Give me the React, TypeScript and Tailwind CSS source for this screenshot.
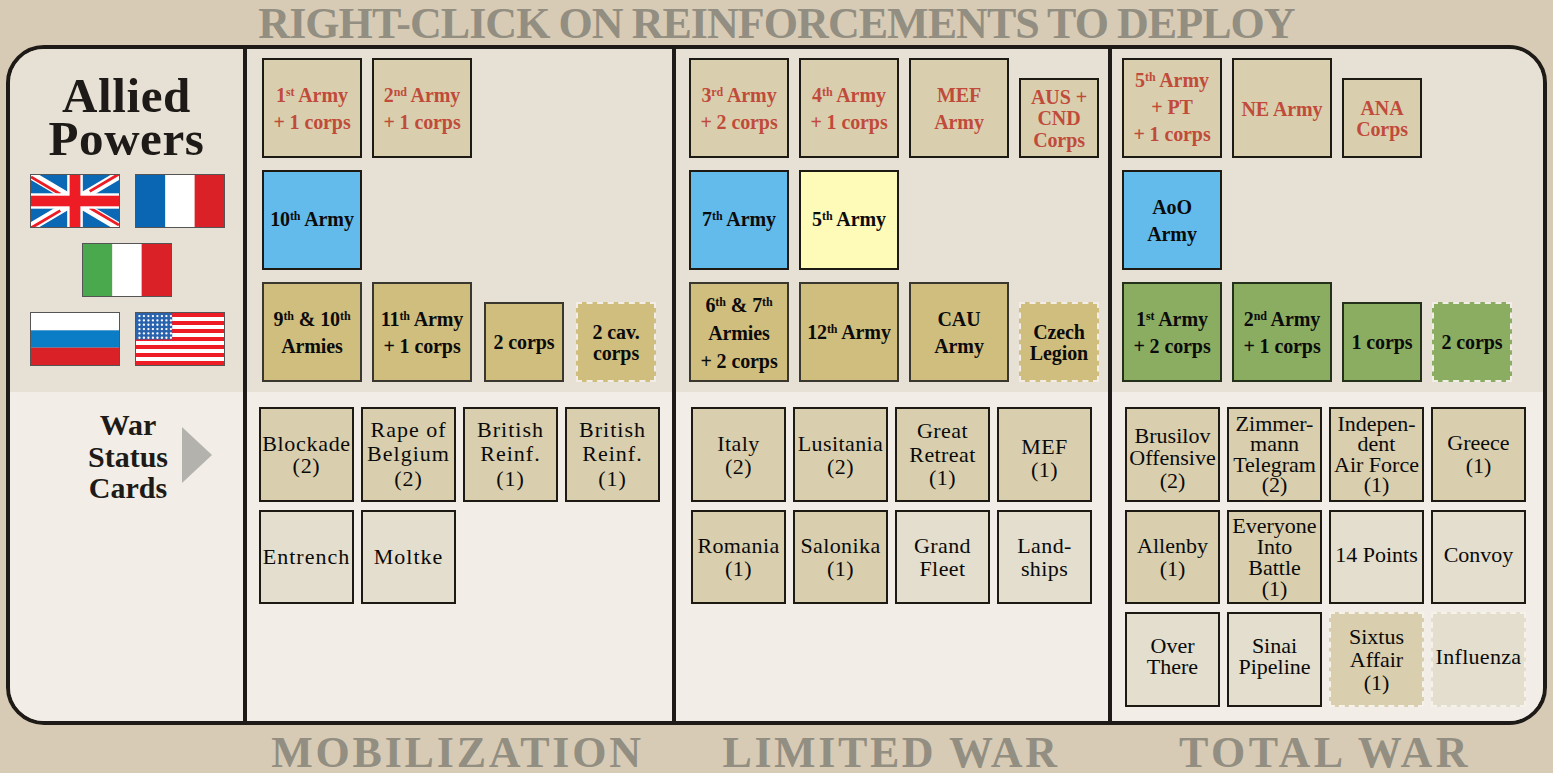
import React from "react";

type V = "red" | "blue" | "yellow" | "gold" | "green";

const tileCls: Record<V, string> = {
  red: "bg-[#d9cfae] text-[#c14b3b] border-[#1d1a14]",
  blue: "bg-[#63bbec] text-[#0b0b0b] border-[#1d1a14]",
  yellow: "bg-[#fefbb8] text-[#0b0b0b] border-[#1d1a14]",
  gold: "bg-[#d0be7e] text-[#0b0b0b] border-[#3a372e]",
  green: "bg-[#8bad62] text-[#0b0b0b] border-[#24301a]",
};

type T = { v: V; t: React.ReactNode; small?: boolean; dash?: boolean; ml?: boolean; off?: string };

function Tile({ v, t, small, dash, ml, off }: T) {
  return (
    <div
      className={`flex shrink-0 items-center justify-center border-2 text-center text-[20px] font-bold tracking-[-0.1px] ${tileCls[v]} ${off ?? "pt-[2px]"} ${small ? "h-[80px] w-[80px] leading-[21.5px]" : "h-[100px] w-[100px] leading-[27px]"} ${dash ? "border-dashed border-[#f2eee7]" : ""} ${ml ? "ml-[2px]" : ""}`}
    >
      <div>{t}</div>
    </div>
  );
}

function Row({ items }: { items: T[] }) {
  return (
    <div className="flex h-[100px] items-end gap-[10px]">
      {items.map((it, i) => (
        <Tile key={i} {...it} />
      ))}
    </div>
  );
}

type C = { l: string[]; k: "tan" | "pale"; dash?: boolean; lh?: string; off?: string; tr?: string };

function Card({ l, k, dash, lh, off, tr }: C) {
  return (
    <div
      className={`flex w-[95px] items-center justify-center border-2 text-center text-[22px] text-[#0a0a0a] ${k === "tan" ? "bg-[#d9cfae]" : "bg-[#e3decd]"} ${dash ? "border-dashed border-[#f5f2ea]" : "border-[#1d1a14]"} ${lh ?? "leading-[23px]"} ${off ?? ""} ${tr ?? ""}`}
    >
      <div>
        {l.map((s, i) => (
          <div key={i} className="whitespace-nowrap">
            {s}
          </div>
        ))}
      </div>
    </div>
  );
}

function Cards({ items, pl, track }: { items: C[]; pl: string; track: string }) {
  return (
    <div className={`grid grid-cols-[95px_95px_95px_95px] grid-rows-[95px_94px_95px] gap-x-[7px] gap-y-[8px] pt-[15px] ${pl} ${track}`}>
      {items.map((c, i) => (
        <Card key={i} {...c} />
      ))}
    </div>
  );
}

const flagCls = "block h-[54px] w-[90px] border border-[#555]";

function UK() {
  return (
    <svg viewBox="0 0 90 54" preserveAspectRatio="none" className={flagCls}>
      <rect width="90" height="54" fill="#0a68b4" />
      <path d="M0 0L90 54M90 0L0 54" stroke="#fff" strokeWidth="9" />
      <path d="M0 2L30 20M90 52L60 34M90 -1L60 17M0 55L30 37" stroke="#ee1c25" strokeWidth="3" />
      <rect x="37" width="16" height="54" fill="#fff" />
      <rect y="19" width="90" height="16" fill="#fff" />
      <rect x="39.5" width="11" height="54" fill="#ee1c25" />
      <rect y="21.5" width="90" height="11" fill="#ee1c25" />
    </svg>
  );
}

function Tri({ a, c }: { a: string; c: string }) {
  return (
    <svg viewBox="0 0 90 54" preserveAspectRatio="none" className={flagCls}>
      <rect width="30" height="54" fill={a} />
      <rect x="30" width="30" height="54" fill="#fff" />
      <rect x="60" width="30" height="54" fill={c} />
    </svg>
  );
}

function RU() {
  return (
    <svg viewBox="0 0 90 54" preserveAspectRatio="none" className={flagCls}>
      <rect width="90" height="18" fill="#fff" />
      <rect y="18" width="90" height="18" fill="#0b7cc6" />
      <rect y="36" width="90" height="18" fill="#da2128" />
    </svg>
  );
}

function US() {
  const stripes = Array.from({ length: 13 }, (_, i) => i);
  const dots: [number, number][] = [];
  for (let r = 0; r < 6; r++) for (let c = 0; c < 8; c++) dots.push([3.5 + c * 4.6, 3.2 + r * 4.5]);
  return (
    <svg viewBox="0 0 90 54" preserveAspectRatio="none" className={flagCls}>
      <rect width="90" height="54" fill="#fff" />
      {stripes.map((i) =>
        i % 2 === 0 ? <rect key={i} y={(i * 54) / 13} width="90" height={54 / 13} fill="#ee1c25" /> : null,
      )}
      <rect width="37" height="27.5" fill="#2a63ad" />
      {dots.map(([x, y], i) => (
        <circle key={i} cx={x} cy={y} r="1.2" fill="#fff" />
      ))}
    </svg>
  );
}

const S = ({ c }: { c: string }) => <sup className="text-[12px]">{c}</sup>;

const serif = { fontFamily: '"Liberation Serif", serif' };

export default function App() {
  const labelCls = "text-center text-[44px] font-bold leading-[40px] text-[#928e81]";
  const topCls = "border-r-4 border-[#1d1a17] bg-[#e7e0d4]";
  const botCls = "border-r-4 border-[#1d1a17] bg-[#f2eee7]";
  return (
    <div className="h-[773px] w-[1553px] overflow-hidden bg-[#d8cbb5]" style={serif}>
      <div className={`flex h-[45px] items-center justify-center whitespace-nowrap pt-[3px] tracking-[-0.95px] [word-spacing:-1px] ${labelCls}`}>
        RIGHT-CLICK ON REINFORCEMENTS TO DEPLOY
      </div>

      <div className="ml-[6px] grid h-[680px] w-[1541px] grid-cols-[237px_429px_436px_431px] grid-rows-[343px_329px] overflow-hidden rounded-[38px] border-4 border-[#1d1a17]">
        <div className={`${topCls} flex flex-col items-center pt-[25px]`}>
          <div className="text-center text-[49px] font-bold leading-[43px] tracking-[0.6px] text-[#1d1a17]">
            Allied
            <br />
            Powers
          </div>
          <div className="ml-[1px] mt-[14px] flex flex-col items-center gap-[15px]">
            <div className="flex gap-[15px]">
              <UK />
              <Tri a="#0a65b2" c="#da2128" />
            </div>
            <Tri a="#4aa94c" c="#da2128" />
            <div className="flex gap-[15px]">
              <RU />
              <US />
            </div>
          </div>
        </div>

        <div className={`${topCls} flex flex-col gap-[12px] pl-[15px] pt-[9px]`}>
          <Row
            items={[
              { v: "red", t: <>1<S c="st" /> Army<br />+ 1 corps</> },
              { v: "red", t: <>2<S c="nd" /> Army<br />+ 1 corps</> },
            ]}
          />
          <Row items={[{ v: "blue", t: <>10<S c="th" /> Army</>, off: "pb-[2px]" }]} />
          <Row
            items={[
              { v: "gold", t: <>9<S c="th" /> &amp; 10<S c="th" /><br />Armies</> },
              { v: "gold", t: <>11<S c="th" /> Army<br />+ 1 corps</> },
              { v: "gold", t: "2 corps", small: true, ml: true },
              { v: "gold", t: <>2 cav.<br />corps</>, small: true, dash: true, ml: true },
            ]}
          />
        </div>

        <div className={`${topCls} flex flex-col gap-[12px] pl-[13px] pt-[9px]`}>
          <Row
            items={[
              { v: "red", t: <>3<S c="rd" /> Army<br />+ 2 corps</> },
              { v: "red", t: <>4<S c="th" /> Army<br />+ 1 corps</> },
              { v: "red", t: <>MEF<br />Army</> },
              { v: "red", t: <>AUS +<br />CND<br />Corps</>, small: true },
            ]}
          />
          <Row
            items={[
              { v: "blue", t: <>7<S c="th" /> Army</>, off: "pb-[2px]" },
              { v: "yellow", t: <>5<S c="th" /> Army</>, off: "pb-[2px]" },
            ]}
          />
          <Row
            items={[
              { v: "gold", t: <div className="leading-[28px]">6<S c="th" /> &amp; 7<S c="th" /><br />Armies<br />+ 2 corps</div> },
              { v: "gold", t: <>12<S c="th" /> Army</>, off: "pt-[1px]" },
              { v: "gold", t: <>CAU<br />Army</> },
              { v: "gold", t: <>Czech<br />Legion</>, small: true, dash: true },
            ]}
          />
        </div>

        <div className="flex flex-col gap-[12px] bg-[#e7e0d4] pl-[10px] pt-[9px]">
          <Row
            items={[
              { v: "red", t: <>5<S c="th" /> Army<br />+ PT<br />+ 1 corps</>, off: "pb-[2px]" },
              { v: "red", t: "NE Army" },
              { v: "red", t: <>ANA<br />Corps</>, small: true },
            ]}
          />
          <Row items={[{ v: "blue", t: <>AoO<br />Army</> }]} />
          <Row
            items={[
              { v: "green", t: <>1<S c="st" /> Army<br />+ 2 corps</> },
              { v: "green", t: <>2<S c="nd" /> Army<br />+ 1 corps</> },
              { v: "green", t: "1 corps", small: true },
              { v: "green", t: "2 corps", small: true, dash: true },
            ]}
          />
        </div>

        <div className={`${botCls} flex items-start pl-[68px] pt-[17px]`}>
          <div className="w-[100px] text-center text-[30px] font-bold leading-[31.5px] text-[#1d1a17]">
            War
            <br />
            Status
            <br />
            Cards
          </div>
          <svg viewBox="0 0 30 56" className="ml-[4px] mt-[18px] h-[56px] w-[30px]">
            <path d="M0 0L30 28L0 56Z" fill="#b3b2ad" />
          </svg>
        </div>

        <div className={botCls}>
          <Cards
            pl="pl-[12px]"
            track="tracking-[0.7px]"
            items={[
              { l: ["Blockade", "(2)"], k: "tan", lh: "leading-[22px]" },
              { l: ["Rape of", "Belgium", "(2)"], k: "tan", lh: "leading-[24.5px]", tr: "tracking-[1px]" },
              { l: ["British", "Reinf.", "(1)"], k: "tan", lh: "leading-[24.5px]", tr: "tracking-[1px]" },
              { l: ["British", "Reinf.", "(1)"], k: "tan", lh: "leading-[24.5px]", tr: "tracking-[1px]" },
              { l: ["Entrench"], k: "pale", off: "pb-[2px]", tr: "tracking-[1px]" },
              { l: ["Moltke"], k: "pale", off: "pb-[2px]", tr: "tracking-[1px]" },
            ]}
          />
        </div>
        <div className={botCls}>
          <Cards
            pl="pl-[15px]"
            track="tracking-[0.4px]"
            items={[
              { l: ["Italy", "(2)"], k: "tan" },
              { l: ["Lusitania", "(2)"], k: "tan" },
              { l: ["Great", "Retreat", "(1)"], k: "tan", lh: "leading-[23.5px]" },
              { l: ["MEF", "(1)"], k: "tan", off: "pt-[6px]" },
              { l: ["Romania", "(1)"], k: "tan" },
              { l: ["Salonika", "(1)"], k: "tan" },
              { l: ["Grand", "Fleet"], k: "pale" },
              { l: ["Land-", "ships"], k: "pale" },
            ]}
          />
        </div>
        <div className="bg-[#f2eee7]">
          <Cards
            pl="pl-[13px]"
            track="tracking-normal"
            items={[
              { l: ["Brusilov", "Offensive", "(2)"], k: "tan", lh: "leading-[22.5px]", off: "pt-[8px]" },
              { l: ["Zimmer-", "mann", "Telegram", "(2)"], k: "tan", lh: "leading-[20.5px]" },
              { l: ["Indepen-", "dent", "Air Force", "(1)"], k: "tan", lh: "leading-[20.5px]" },
              { l: ["Greece", "(1)"], k: "tan", off: "pb-[2px]" },
              { l: ["Allenby", "(1)"], k: "tan" },
              { l: ["Everyone", "Into", "Battle", "(1)"], k: "tan", lh: "leading-[21px]" },
              { l: ["14 Points"], k: "pale", off: "pb-[6px]" },
              { l: ["Convoy"], k: "pale", off: "pb-[6px]" },
              { l: ["Over", "There"], k: "pale", lh: "leading-[21px]", off: "pb-[8px]" },
              { l: ["Sinai", "Pipeline"], k: "pale", lh: "leading-[21px]", off: "pb-[8px]" },
              { l: ["Sixtus", "Affair", "(1)"], k: "tan", dash: true },
              { l: ["Influenza"], k: "pale", dash: true, off: "pb-[6px]", tr: "tracking-[0.3px]" },
            ]}
          />
        </div>
      </div>

      <div className="ml-[10px] mt-[8px] grid w-[1533px] grid-cols-[237px_429px_436px_431px]">
        <div />
        <div className={`pr-[8px] tracking-[2.8px] ${labelCls}`}>MOBILIZATION</div>
        <div className={`pr-[6px] tracking-[2.6px] ${labelCls}`}>LIMITED WAR</div>
        <div className={`pr-[5px] tracking-[3.5px] ${labelCls}`}>TOTAL WAR</div>
      </div>
    </div>
  );
}
